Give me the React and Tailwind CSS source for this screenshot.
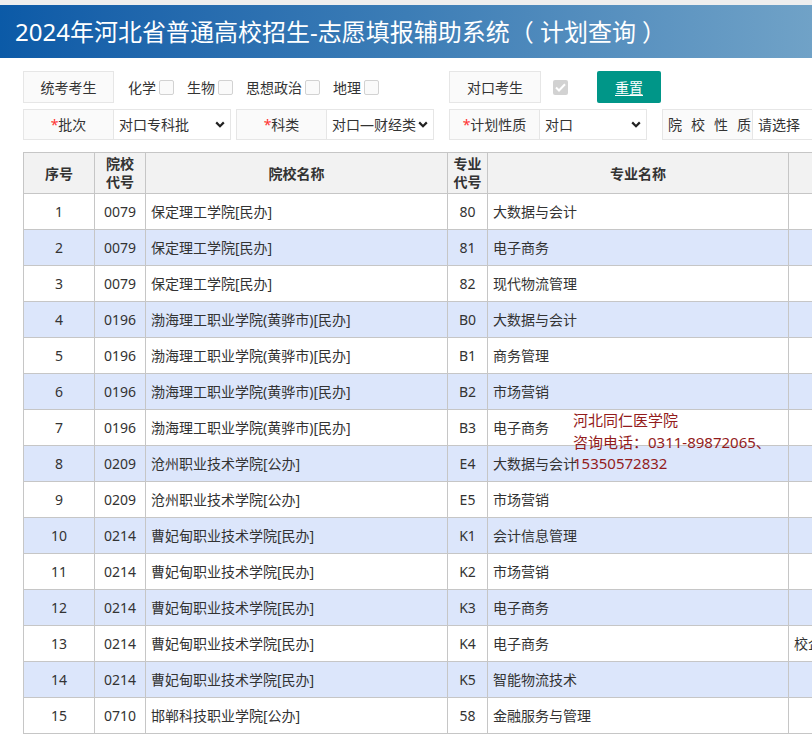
const rows = [
  ['1', '0079', '保定理工学院[民办]', '80', '大数据与会计', ''],
  ['2', '0079', '保定理工学院[民办]', '81', '电子商务', ''],
  ['3', '0079', '保定理工学院[民办]', '82', '现代物流管理', ''],
  ['4', '0196', '渤海理工职业学院(黄骅市)[民办]', 'B0', '大数据与会计', ''],
  ['5', '0196', '渤海理工职业学院(黄骅市)[民办]', 'B1', '商务管理', ''],
  ['6', '0196', '渤海理工职业学院(黄骅市)[民办]', 'B2', '市场营销', ''],
  ['7', '0196', '渤海理工职业学院(黄骅市)[民办]', 'B3', '电子商务', ''],
  ['8', '0209', '沧州职业技术学院[公办]', 'E4', '大数据与会计', ''],
  ['9', '0209', '沧州职业技术学院[公办]', 'E5', '市场营销', ''],
  ['10', '0214', '曹妃甸职业技术学院[民办]', 'K1', '会计信息管理', ''],
  ['11', '0214', '曹妃甸职业技术学院[民办]', 'K2', '市场营销', ''],
  ['12', '0214', '曹妃甸职业技术学院[民办]', 'K3', '电子商务', ''],
  ['13', '0214', '曹妃甸职业技术学院[民办]', 'K4', '电子商务', '校企合作'],
  ['14', '0214', '曹妃甸职业技术学院[民办]', 'K5', '智能物流技术', ''],
  ['15', '0710', '邯郸科技职业学院[公办]', '58', '金融服务与管理', ''],
];

const Chevron = () => (
  <svg width="10" height="7" viewBox="0 0 10 7" className="shrink-0">
    <path d="M1.2 1.4 L5 5.2 L8.8 1.4" fill="none" stroke="#222" strokeWidth="2.2" />
  </svg>
);

const Check = ({ label }) => (
  <div className="flex items-center mr-[13px]">
    <span>{label}</span>
    <span className="ml-[3px] w-[15px] h-[15px] rounded-[2px] border border-[#d2d2d2] bg-[#fafafa]" />
  </div>
);

const Field = ({ label, value, selectW, required, spaced }) => (
  <div className="flex h-full">
    <div
      className={
        'w-[91px] h-full flex items-center border border-[#e6e6e6] bg-[#fafafa] whitespace-nowrap ' +
        (spaced ? 'pl-[5px] gap-[9px]' : 'justify-center')
      }
    >
      {required && <span className="text-[#ff3333]">*</span>}
      {spaced ? label.split('').map((c) => <span key={c}>{c}</span>) : label}
    </div>
    <div
      className="h-full flex items-center justify-between pl-[5px] pr-[5px] border border-l-0 border-[#e6e6e6] bg-white overflow-hidden"
      style={{ width: selectW }}
    >
      <span className="whitespace-nowrap">{value}</span>
      {!spaced && <Chevron />}
    </div>
  </div>
);

export default function App() {
  return (
    <div
      className="relative w-[812px] h-[737px] overflow-hidden bg-white text-[14px] text-[#333]"
      style={{ fontFamily: '"Noto Sans", "Noto Sans CJK SC", sans-serif' }}
    >
      <div className="h-[5px] bg-[#eeeeee]" />
      <div className="h-[53px] pl-[15px] flex items-center bg-linear-to-r from-[#0b5aa7] via-[#3c7db6] to-[#70a2c7] text-white text-[24px] leading-none whitespace-nowrap">
        2024年河北省普通高校招生-志愿填报辅助系统（ 计划查询 ）
      </div>

      <div className="pl-[23px]">
        {/* row 1 */}
        <div className="mt-[13px] h-[32px] flex items-center">
          <div className="w-[91px] h-full flex items-center justify-center border border-[#e6e6e6] bg-[#fafafa]">
            统考考生
          </div>
          <div className="w-[335px] pl-[14px] flex items-center">
            <Check label="化学" />
            <Check label="生物" />
            <Check label="思想政治" />
            <Check label="地理" />
          </div>
          <div className="w-[92px] h-full flex items-center justify-center border border-[#e6e6e6] bg-[#fafafa]">
            对口考生
          </div>
          <div className="ml-[12px] w-[15px] h-[15px] rounded-[2px] bg-[#d2d2d2] flex items-center justify-center">
            <svg width="11" height="9" viewBox="0 0 11 9">
              <path d="M1 4.5 L4 7.5 L10 1.2" fill="none" stroke="#fff" strokeWidth="2" />
            </svg>
          </div>
          <button className="ml-[29px] w-[64px] h-full rounded-[2px] bg-[#009688] text-white underline underline-offset-2">
            重置
          </button>
        </div>

        {/* row 2 */}
        <div className="mt-[6px] h-[31px] flex items-center gap-[15px]">
          <div className="flex h-full gap-[5px]">
            <Field label="批次" value="对口专科批" selectW={117} required />
            <Field label="科类" value="对口—财经类" selectW={107} required />
          </div>
          <Field label="计划性质" value="对口" selectW={107} required />
          <Field label="院校性质" value="请选择" selectW={107} spaced />
        </div>

        {/* table */}
        <table className="mt-[12px] table-fixed border-collapse w-[885px]">
          <colgroup>
            <col className="w-[71px]" />
            <col className="w-[51px]" />
            <col className="w-[302px]" />
            <col className="w-[40px]" />
            <col className="w-[301px]" />
            <col className="w-[120px]" />
          </colgroup>
          <thead>
            <tr className="h-[41px] bg-[#f2f2f2] font-bold">
              <th className="border border-[#c6c6c6] font-bold">序号</th>
              <th className="border border-[#c6c6c6] font-bold leading-[18px]">院校<br />代号</th>
              <th className="border border-[#c6c6c6] font-bold">院校名称</th>
              <th className="border border-[#c6c6c6] font-bold leading-[18px]">专业<br />代号</th>
              <th className="border border-[#c6c6c6] font-bold">专业名称</th>
              <th className="border border-[#c6c6c6]"></th>
            </tr>
          </thead>
          <tbody>
            {rows.map((r, i) => (
              <tr key={r[0]} className={'h-[36px] ' + (i % 2 === 1 ? 'bg-[#dce6fb]' : 'bg-white')}>
                <td className="border border-[#c6c6c6] text-center">{r[0]}</td>
                <td className="border border-[#c6c6c6] text-center">{r[1]}</td>
                <td className="border border-[#c6c6c6] pl-[5px] whitespace-nowrap">{r[2]}</td>
                <td className="border border-[#c6c6c6] text-center">{r[3]}</td>
                <td className="border border-[#c6c6c6] pl-[5px] whitespace-nowrap">{r[4]}</td>
                <td className="border border-[#c6c6c6] pl-[5px] whitespace-nowrap overflow-hidden">{r[5]}</td>
              </tr>
            ))}
          </tbody>
        </table>
      </div>

      {/* floating contact notice */}
      <div className="absolute left-[573px] top-[410px] text-[15px] leading-[21.5px] text-[#931c1c] whitespace-nowrap">
        <div>河北同仁医学院</div>
        <div>咨询电话：0311-89872065、</div>
        <div>15350572832</div>
      </div>
    </div>
  );
}
